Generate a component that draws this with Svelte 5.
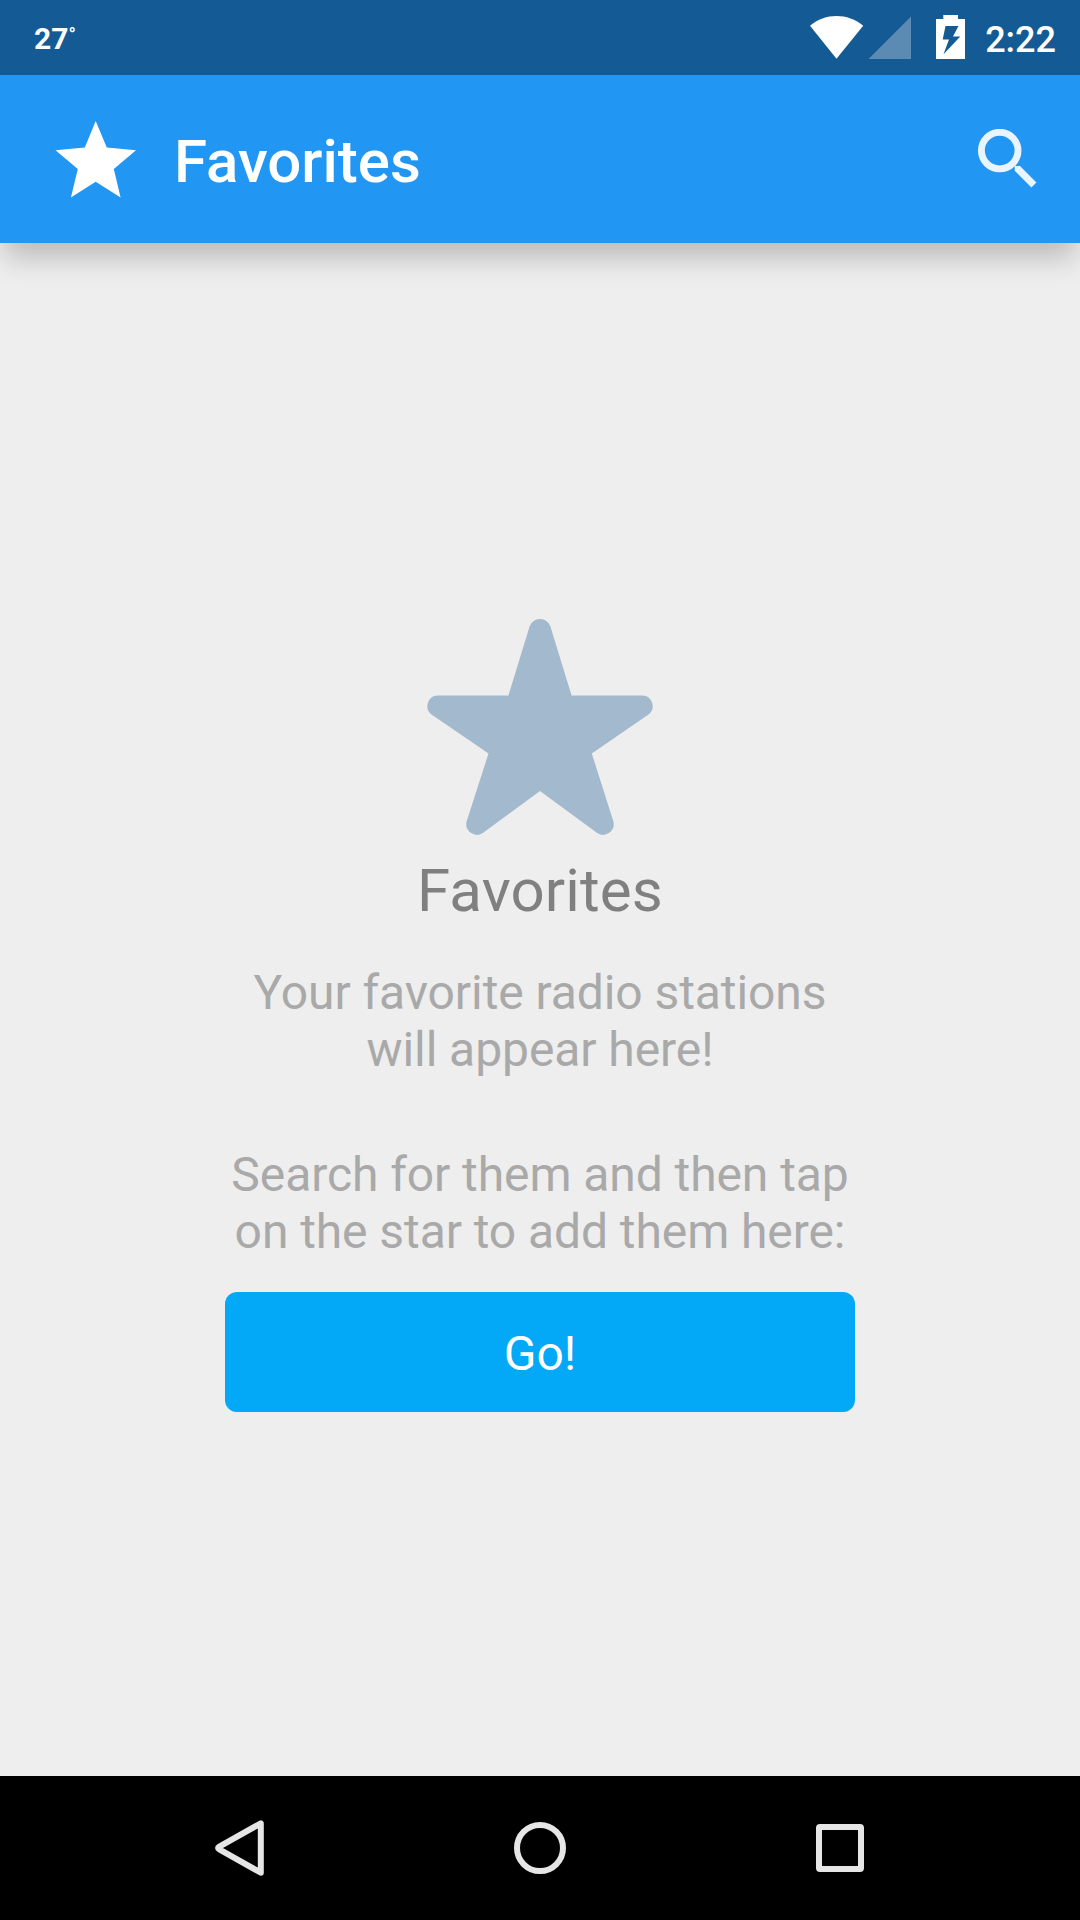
<script lang="ts">
  interface Props {
    temperature?: string;
    time?: string;
    title?: string;
  }

  let { temperature = '27', time = '2:22', title = 'Favorites' }: Props = $props();

  // Empty state copy, one array per paragraph
  const hints = [
    ['Your favorite radio stations', 'will appear here!'],
    ['Search for them and then tap', 'on the star to add them here:']
  ];
</script>

<div class="screen">
  <!-- STATUS BAR -->
  <div class="status-bar">
    <span class="temperature">{temperature}<span class="degree">°</span></span>
    <div class="status-icons">
      <svg width="155" height="75" viewBox="810 0 155 75">
        <path d="M810 25.7C825 12.8 848 12.8 863.2 25.7L836.5 58.8Z" fill="#fff" />
        <path d="M868.5 59H911V16.5Z" fill="#5b8bb3" />
        <path
          d="M943.3 15H958V19H965V59H936V19H943.3ZM945.5 26L942.7 39.5H949L943.5 54.3L960.3 36.5H953L958.5 26Z"
          fill="#fff"
          fill-rule="evenodd"
        />
      </svg>
      <span class="clock">{time}</span>
    </div>
  </div>

  <!-- APP BAR -->
  <header class="app-bar">
    <svg class="bar-star" width="82" height="78" viewBox="55 120 82 78">
      <path
        d="M95.7 121L106.8 147.5L136 150.3L113.8 169L120.6 197.5L95.7 181.7L70.9 197.5L77.8 169L55.5 150.3L84.8 147.5Z"
        fill="#fff"
      />
    </svg>
    <h1>{title}</h1>
    <button class="icon-button" aria-label="Search">
      <svg width="60" height="60" viewBox="977 129 60 60">
        <circle cx="999.7" cy="150.6" r="18.3" fill="none" stroke="#e9f4fe" stroke-width="6.9" />
        <path d="M1012.6 163L1015.4 166H1020L1036.4 182.6L1031.4 187.5L1014.7 170.8V166.4L1012 163.6Z" fill="#e9f4fe" />
      </svg>
    </button>
  </header>

  <!-- EMPTY STATE -->
  <main class="empty-state">
    <svg width="226" height="218" viewBox="427 618 226 218">
      <path
        d="M529.6 626.5Q532.5 619 540 619Q547.5 619 550.4 626.5L571.6 695.4H642.5A10.7 10.7 0 0 1 648.5 714.5L591.8 753.5L613.4 821.5A10.7 10.7 0 0 1 597.2 833L540 791L482.8 833A10.7 10.7 0 0 1 466.6 821.5L488.5 753.5L431.5 714.5A10.7 10.7 0 0 1 437.5 695.4H508.4Z"
        fill="#a3b9cd"
      />
    </svg>
    <h2>{title}</h2>
    {#each hints as lines}
      <p>{lines[0]}<br />{lines[1]}</p>
    {/each}
    <button class="go">Go!</button>
  </main>

  <!-- NAVIGATION BAR -->
  <nav class="nav-bar">
    <button aria-label="Back">
      <svg width="60" height="60" viewBox="210 1818 60 60">
        <path d="M260.8 1823.3V1872.7L219.3 1849.4Q216.8 1848 219.3 1846.6Z" />
      </svg>
    </button>
    <button aria-label="Home">
      <svg width="60" height="60" viewBox="510 1818 60 60">
        <circle cx="540" cy="1848" r="23" />
      </svg>
    </button>
    <button aria-label="Recent apps">
      <svg width="60" height="60" viewBox="810 1818 60 60">
        <rect x="819" y="1827" width="42" height="42" rx="1" />
      </svg>
    </button>
  </nav>
</div>

<style>
  :global(body) {
    background: #eee;
  }

  .screen {
    display: flex;
    flex-direction: column;
    width: 1080px;
    height: 1920px;
    overflow: hidden;
    background: #eee;
    font-family: Roboto, sans-serif;
  }

  svg {
    display: block;
    flex-shrink: 0;
  }

  h1,
  h2,
  p {
    margin: 0;
  }

  button {
    padding: 0;
    border: 0;
    background: none;
    font-family: inherit;
    cursor: pointer;
  }

  /* Status bar, kept above the app bar shadow */
  .status-bar {
    position: relative;
    z-index: 1;
    display: flex;
    align-items: center;
    justify-content: space-between;
    height: 75px;
    padding: 0 24px 0 34px;
    background: #145a94;
    color: #fff;
  }

  .temperature {
    display: flex;
    align-items: flex-start;
    font-size: 30px;
    font-weight: 700;
    line-height: 36px;
    padding-top: 3px;
  }

  .degree {
    font-size: 19px;
    line-height: 28px;
  }

  .status-icons {
    display: flex;
    align-items: center;
    gap: 20px;
  }

  .clock {
    padding-top: 4px;
    font-size: 36px;
    font-weight: 500;
    line-height: 42px;
  }

  /* App bar */
  .app-bar {
    position: relative;
    display: flex;
    align-items: center;
    height: 168px;
    padding: 0 43px 0 55px;
    background: #2196f3;
    box-shadow: 0 20px 26px -5px rgba(0, 0, 0, 0.21);
  }

  .app-bar h1 {
    flex: 1;
    padding-left: 37px;
    padding-top: 6px;
    color: #fff;
    font-size: 60px;
    font-weight: 500;
    line-height: 70px;
  }

  /* Empty state */
  .empty-state {
    flex: 1;
    display: flex;
    flex-direction: column;
    align-items: center;
    padding-top: 375px;
    text-align: center;
  }

  .empty-state h2 {
    margin-top: 20px;
    color: #808080;
    font-size: 60px;
    font-weight: 400;
    line-height: 70px;
    letter-spacing: 0.15px;
  }

  .empty-state p {
    margin-top: 38px;
    color: #a9a9a9;
    font-size: 48px;
    line-height: 57px;
    letter-spacing: -0.08px;
  }

  .empty-state p + p {
    margin-top: 68px;
  }

  .empty-state .go {
    width: 630px;
    height: 120px;
    margin-top: 32px;
    padding-top: 4px;
    border-radius: 12px;
    background: #03a9f6;
    color: #fff;
    font-size: 48px;
    line-height: 56px;
  }

  /* Navigation bar */
  .nav-bar {
    display: flex;
    align-items: center;
    justify-content: center;
    gap: 240px;
    height: 144px;
    background: #000;
  }

  .nav-bar svg {
    fill: none;
    stroke: #e6e6e6;
    stroke-width: 6;
    stroke-linejoin: round;
  }
</style>
